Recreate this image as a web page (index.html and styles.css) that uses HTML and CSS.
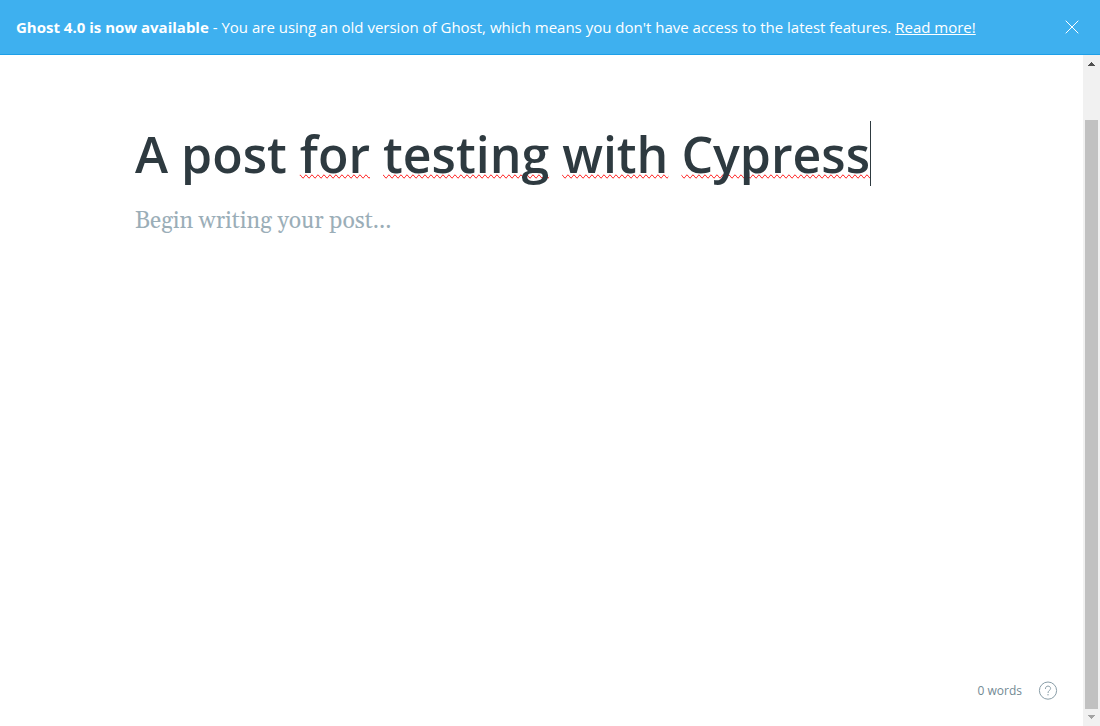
FILE: index.html
```html
<!DOCTYPE html>
<html lang="en">
<head>
<meta charset="utf-8">
<title>Ghost editor</title>
<link rel="stylesheet" href="styles.css">
</head>
<body>
<aside class="banner">
  <p class="banner-text"><strong>Ghost 4.0 is now available</strong> - You are using an old version of Ghost, which means you don't have access to the latest features. <a class="banner-link" href="#">Read more!</a></p>
  <button class="banner-close" type="button" aria-label="Close">
    <svg width="14" height="14" viewBox="0 0 14 14" fill="none" stroke="currentColor"><path d="M.7.7l12.6 12.6M13.3.7L.7 13.3"/></svg>
  </button>
</aside>
<div class="workspace">
  <main class="editor">
    <div class="canvas">
      <h1 class="title" role="textbox" aria-label="Post title" contenteditable="true" spellcheck="false">A post <span class="misspelled">for</span> <span class="misspelled">testing</span> <span class="misspelled">with</span> <span class="misspelled">Cypress</span><span class="caret"></span></h1>
      <textarea class="body-text" aria-label="Post body" placeholder="Begin writing your post..."></textarea>
    </div>
    <footer class="status">
      <span class="word-count">0 words</span>
      <a class="help" href="#" aria-label="Help">
        <svg width="20" height="20" viewBox="0 0 20 20" fill="none" stroke="currentColor"><circle cx="10" cy="9.6" r="8.6"/><path d="M7.4 7.6c0-1.5 1.1-2.5 2.6-2.5s2.6 1 2.6 2.4c0 1.8-2.6 2-2.6 4.1" stroke-linecap="round"/><circle cx="10" cy="13.8" r=".7" fill="currentColor" stroke="none"/></svg>
      </a>
    </footer>
  </main>
  <div class="scrollbar" aria-hidden="true">
    <svg class="arrow arrow-up" width="17" height="17" viewBox="0 0 17 17"><path d="M5 11h7v-1h-1V9h-1V8H9V7H8v1H7v1H6v1H5z" fill="currentColor"/></svg>
    <div class="track"><div class="thumb"></div></div>
    <svg class="arrow" width="17" height="17" viewBox="0 0 17 17"><path d="M5 6h7v1h-1v1h-1v1H9v1H8V9H7V8H6V7H5z" fill="currentColor"/></svg>
  </div>
</div>
</body>
</html>
```
FILE: styles.css
```css
* { box-sizing: border-box; }

body {
  display: flex;
  flex-direction: column;
  height: 100vh;
  margin: 0;
  overflow: hidden;
  background: #fff;
  color: #2e3a40;
  font-family: "Open Sans", "Noto Sans", sans-serif;
}

.banner {
  display: flex;
  align-items: center;
  justify-content: space-between;
  padding: 16px 21px 16px 16px;
  border-bottom: 1px solid #1d9fe8;
  background: #3eb0ef;
  color: #fff;
}

.banner-text {
  margin: 0;
  font-size: 15px;
  line-height: 22px;
}

.banner-link { color: inherit; }

.banner-close {
  display: flex;
  padding: 0;
  border: 0;
  background: none;
  color: inherit;
}

.workspace {
  display: flex;
  flex: 1;
  min-height: 0;
}

.editor {
  display: flex;
  flex: 1;
  flex-direction: column;
}

.canvas {
  display: flex;
  flex: 1;
  flex-direction: column;
  padding: 66px 135px 0;
}

.title {
  margin: 0 0 16px;
  outline: 0;
  font-size: 50px;
  font-weight: 600;
  line-height: 67px;
  white-space: nowrap;
}

.misspelled {
  text-decoration: spelling-error;
  text-decoration-skip-ink: none;
}

.caret {
  display: inline-block;
  width: 1px;
  height: 65px;
  background: #2e3a40;
  vertical-align: top;
}

.body-text {
  flex: 1;
  padding: 0;
  border: 0;
  outline: 0;
  resize: none;
  background: none;
  color: inherit;
  font-family: Georgia, Gelasio, "Liberation Serif", serif;
  font-size: 23px;
  line-height: 36px;
}

.body-text::placeholder { color: #9baeb8; }

.status {
  display: flex;
  align-items: center;
  justify-content: flex-end;
  gap: 16px;
  padding: 0 25px 25px;
  color: #738a94;
  font-size: 12px;
  line-height: 20px;
}

.help {
  display: flex;
  color: #8a9ea8;
}

.scrollbar {
  display: flex;
  flex-direction: column;
  width: 17px;
  background: #f1f1f1;
  color: #a3a3a3;
}

.arrow-up { color: #505050; }

.track {
  display: flex;
  flex: 1;
  align-items: flex-end;
  padding: 0 2px;
}

.thumb {
  width: 100%;
  height: 92.5%;
  background: #c1c1c1;
}
```
